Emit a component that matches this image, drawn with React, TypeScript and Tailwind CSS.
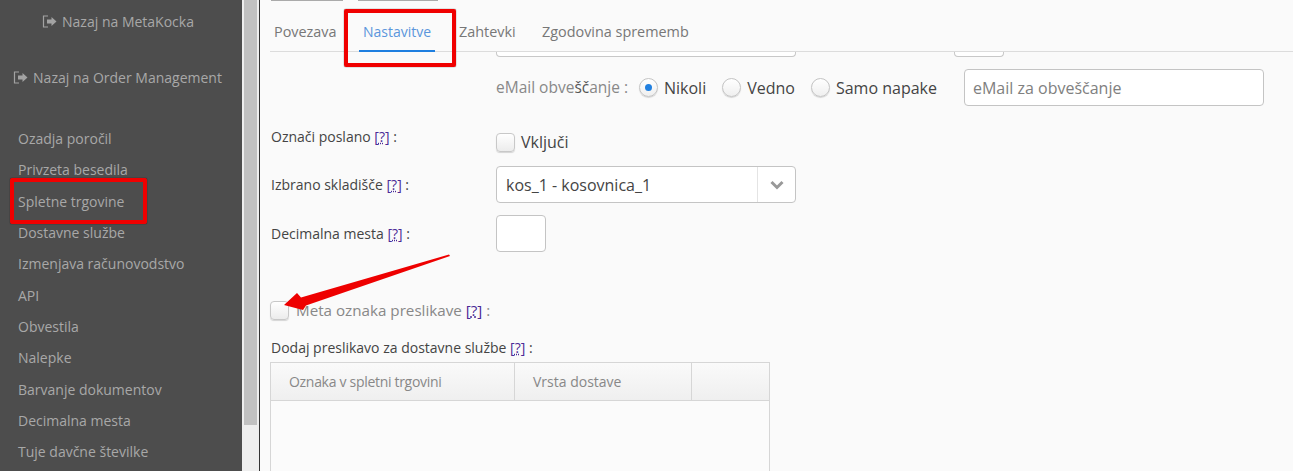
const menu = [
  "Ozadja poročil",
  "Privzeta besedila",
  "Spletne trgovine",
  "Dostavne službe",
  "Izmenjava računovodstvo",
  "API",
  "Obvestila",
  "Nalepke",
  "Barvanje dokumentov",
  "Decimalna mesta",
  "Tuje davčne številke",
]

function BackIcon() {
  return (
    <svg width="15" height="13" viewBox="0 0 15 13" className="shrink-0" fill="none">
      <path d="M6 1H1.5v11H6" stroke="#a3a3a3" strokeWidth="1.2" />
      <path d="M5 4.5h4.5V2L14.5 6.5 9.5 11V8.5H5z" fill="#a3a3a3" />
    </svg>
  )
}

function Help() {
  return (
    <span className="text-[#4b2a96]">
      [<span className="underline decoration-dotted">?</span>]
    </span>
  )
}

function Radio({ on, label }: { on?: boolean; label: string }) {
  return (
    <div className="flex items-center gap-[6px]">
      <span className="w-[19px] h-[19px] rounded-full border border-[#c4c4c4] bg-gradient-to-b from-white to-[#efefef] shadow-[0_1px_1px_rgba(0,0,0,0.15)] flex items-center justify-center">
        {on && <span className="w-[7px] h-[7px] rounded-full bg-[#2180e0]" />}
      </span>
      <span className="text-[16px] text-[#444]">{label}</span>
    </div>
  )
}

function Check() {
  return (
    <span className="block w-[19px] h-[19px] rounded-[4px] border border-[#c8c8c8] bg-gradient-to-b from-white to-[#ececec] shadow-[0_1px_1px_rgba(0,0,0,0.15)]" />
  )
}

export default function App() {
  return (
    <div
      className="relative w-[1293px] h-[471px] overflow-hidden flex bg-[#fafafa]"
      style={{ fontFamily: '"Open Sans", sans-serif' }}
    >
      {/* Sidebar */}
      <aside className="w-[242px] shrink-0 bg-[#4d4d4d] text-[#a8a8a8] text-[14px]">
        <div className="h-[42px] flex items-center justify-center gap-[5px] pr-[6px]">
          <BackIcon />
          <span>Nazaj na MetaKocka</span>
        </div>
        <div className="mt-[13px] h-[44px] flex items-center justify-center gap-[5px] pr-[7px]">
          <BackIcon />
          <span>Nazaj na Order Management</span>
        </div>
        <ul className="mt-[24px] pl-[18px]">
          {menu.map((m) => (
            <li key={m} className="h-[31.3px] flex items-center whitespace-nowrap">
              {m}
            </li>
          ))}
        </ul>
      </aside>

      {/* Scrollbar */}
      <div className="w-[17px] shrink-0 bg-[#eeeeee] pl-[2px]">
        <div className="w-[13px] h-[425px] bg-[#c1c1c1]" />
      </div>
      <div className="w-[1px] shrink-0 bg-[#333]" />

      {/* Main */}
      <main className="flex-1 min-w-0 pl-[10px]">
        <div className="flex gap-[15px] h-[2px] pl-[1px]">
          <div className="w-[72px] h-[1px] bg-[#aaa]" />
          <div className="w-[80px] h-[1px] bg-[#aaa]" />
        </div>

        <nav className="h-[50px] border-b border-[#dcdcdc] flex text-[14.4px] text-[#777]">
          <a className="pl-[4px] w-[66px] pt-[19px]">Povezava</a>
          <a className="ml-[23px] w-[76px] text-center pt-[19px] text-[14px] text-[#5b96dc] border-b-2 border-[#1e7fe0] h-[50px]">
            Nastavitve
          </a>
          <a className="ml-[24px] w-[55px] pt-[19px]">Zahtevki</a>
          <a className="ml-[28px] pt-[19px]">Zgodovina sprememb</a>
        </nav>

        <div className="flex h-[5px] pl-[226px]">
          <div className="w-[300px] h-[5px] border border-t-0 border-[#c8c8c8] rounded-b-[4px] bg-white" />
          <div className="ml-[158px] w-[50px] h-[5px] border border-t-0 border-[#c8c8c8] rounded-b-[4px] bg-white" />
        </div>

        <div className="mt-[12px] flex items-center pl-[226px]">
          <span className="text-[15.5px] text-[#888] w-[143px] whitespace-nowrap">
            eMail obve<span className="text-[#555]">šč</span>anje :
          </span>
          <Radio on label="Nikoli" />
          <div className="ml-[16px]"><Radio label="Vedno" /></div>
          <div className="ml-[16px]"><Radio label="Samo napake" /></div>
          <div className="ml-[27px] w-[300px] h-[37px] rounded-[4px] border border-[#c4c4c4] bg-white flex items-center pl-[8px] text-[16px] text-[#808080]">
            eMail za obveščanje
          </div>
        </div>

        <div className="mt-[26px] flex items-center h-[20px] pl-[1px]">
          <span className="w-[225px] text-[14px] text-[#444] -mt-[12px]">Označi poslano <Help /> :</span>
          <Check />
          <span className="ml-[6px] text-[16px] text-[#444]">Vključi</span>
        </div>

        <div className="mt-[14px] flex items-center pl-[1px]">
          <span className="w-[225px] text-[14px] text-[#444]">Izbrano skladišče <Help /> :</span>
          <div className="w-[300px] h-[37px] rounded-[4px] border border-[#c4c4c4] bg-white flex items-center">
            <span className="flex-1 pl-[9px] text-[16px] text-[#444]">kos_1 - kosovnica_1</span>
            <span className="w-[38px] h-full border-l border-[#e4e4e4] flex items-center justify-center">
              <svg width="14" height="10" viewBox="0 0 14 10" fill="none">
                <path d="M1.5 2 7 7.5 12.5 2" stroke="#999" strokeWidth="3" />
              </svg>
            </span>
          </div>
        </div>

        <div className="mt-[12px] flex pl-[1px]">
          <span className="w-[225px] text-[14px] text-[#444] pt-[8px]">Decimalna mesta <Help /> :</span>
          <div className="w-[50px] h-[37px] rounded-[4px] border border-[#c4c4c4] bg-white" />
        </div>

        <div className="mt-[48px] flex items-center h-[20px]">
          <Check />
          <span className="ml-[7px] text-[15.2px] text-[#888]">Meta oznaka preslikave <Help /> :</span>
        </div>

        <div className="mt-[18px] pl-[1px] text-[14px] text-[#444] leading-[20px]">
          Dodaj preslikavo za dostavne službe <Help /> :
        </div>

        <div className="mt-[4px] w-[500px] h-[200px] border border-[#d6d6d6] bg-[#fbfbfb]">
          <div className="h-[38px] border-b border-[#d6d6d6] bg-gradient-to-b from-[#fafafa] to-[#efefef] flex text-[14px] text-[#888]">
            <div className="w-[244px] border-r border-[#d6d6d6] pl-[18px] flex items-center tracking-[-0.3px]">Oznaka v spletni trgovini</div>
            <div className="w-[177px] border-r border-[#d6d6d6] pl-[18px] flex items-center">Vrsta dostave</div>
          </div>
        </div>
      </main>

      {/* Annotations */}
      <div className="absolute left-[10px] top-[178px] w-[137px] h-[46px] border-[4px] border-[#f00000] rounded-[2px] shadow-[0_0_1px_#000]" />
      <div className="absolute left-[344px] top-[9px] w-[112px] h-[58px] border-[4px] border-[#f00000] rounded-[2px] shadow-[0_0_1px_#000]" />
      <svg className="absolute left-[270px] top-[250px]" width="190" height="70" viewBox="0 0 190 70">
        <path d="M14 55 27 43 31 47.5 179 4.5 180 6 36 55.5 33 60z" fill="#ee0000" />
      </svg>
    </div>
  )
}
